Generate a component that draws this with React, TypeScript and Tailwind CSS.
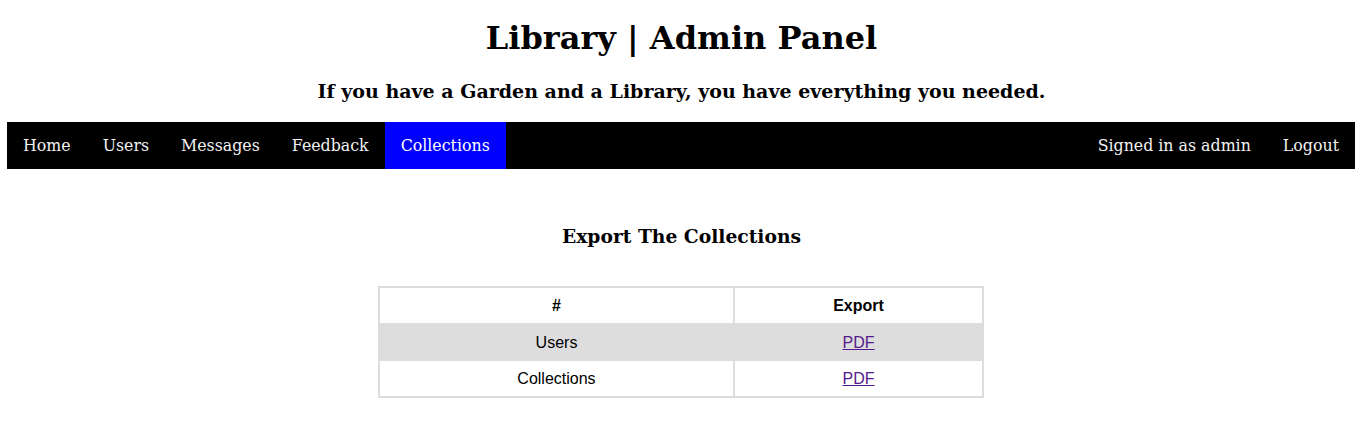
import React from 'react';

const NAV_LEFT = ['Home', 'Users', 'Messages', 'Feedback', 'Collections'];
const NAV_RIGHT = ['Signed in as admin', 'Logout'];

const ROWS = [
  { name: 'Users', bg: 'bg-[#dddddd]', h: 'h-[38px]' },
  { name: 'Collections', bg: 'bg-white', h: 'h-[35px]' },
];

export default function App() {
  return (
    <div className="min-h-screen bg-white text-black font-['DejaVu_Serif',serif]">
      <h1 className="mt-[20px] text-center text-[32px] font-bold leading-[36px]">
        Library | Admin Panel
      </h1>
      <h3 className="mt-[24px] text-center text-[19px] font-bold leading-[22px]">
        If you have a Garden and a Library, you have everything you needed.
      </h3>

      <nav className="mt-[20px] ml-[7px] mr-[8px] flex h-[47px] items-stretch justify-between bg-black text-[15.8px] leading-[20px] text-[#f2f2f2]">
        <div className="flex">
          {NAV_LEFT.map(item => (
            <a
              key={item}
              href="#"
              className={`flex items-center px-4 ${item === 'Collections' ? 'bg-[#0000ff] text-white' : ''}`}
            >
              {item}
            </a>
          ))}
        </div>
        <div className="flex">
          {NAV_RIGHT.map(item => (
            <a key={item} href="#" className="flex items-center px-4">
              {item}
            </a>
          ))}
        </div>
      </nav>

      <h3 className="mt-[55px] text-center text-[18.72px] font-bold leading-[24px]">
        Export The Collections
      </h3>

      <div className="mt-[38px] flex justify-center pr-[1px]">
        <table className="w-[606px] border-separate border-spacing-0 border-2 border-[#dddddd] font-['Liberation_Sans',Arial,sans-serif] text-[16px]">
          <thead>
            <tr className="h-[35px]">
              <th className="w-[355px] border-r-2 border-[#dddddd] p-0 text-center font-bold">#</th>
              <th className="p-0 text-center font-bold">Export</th>
            </tr>
          </thead>
          <tbody>
            {ROWS.map(row => (
              <tr key={row.name} className={`${row.bg} ${row.h}`}>
                <td className="border-r-2 border-[#dddddd] p-0 pt-[1px] text-center">{row.name}</td>
                <td className="p-0 pt-[1px] text-center">
                  <a href="#" className="text-[#551a8b] underline">
                    PDF
                  </a>
                </td>
              </tr>
            ))}
          </tbody>
        </table>
      </div>
    </div>
  );
}
